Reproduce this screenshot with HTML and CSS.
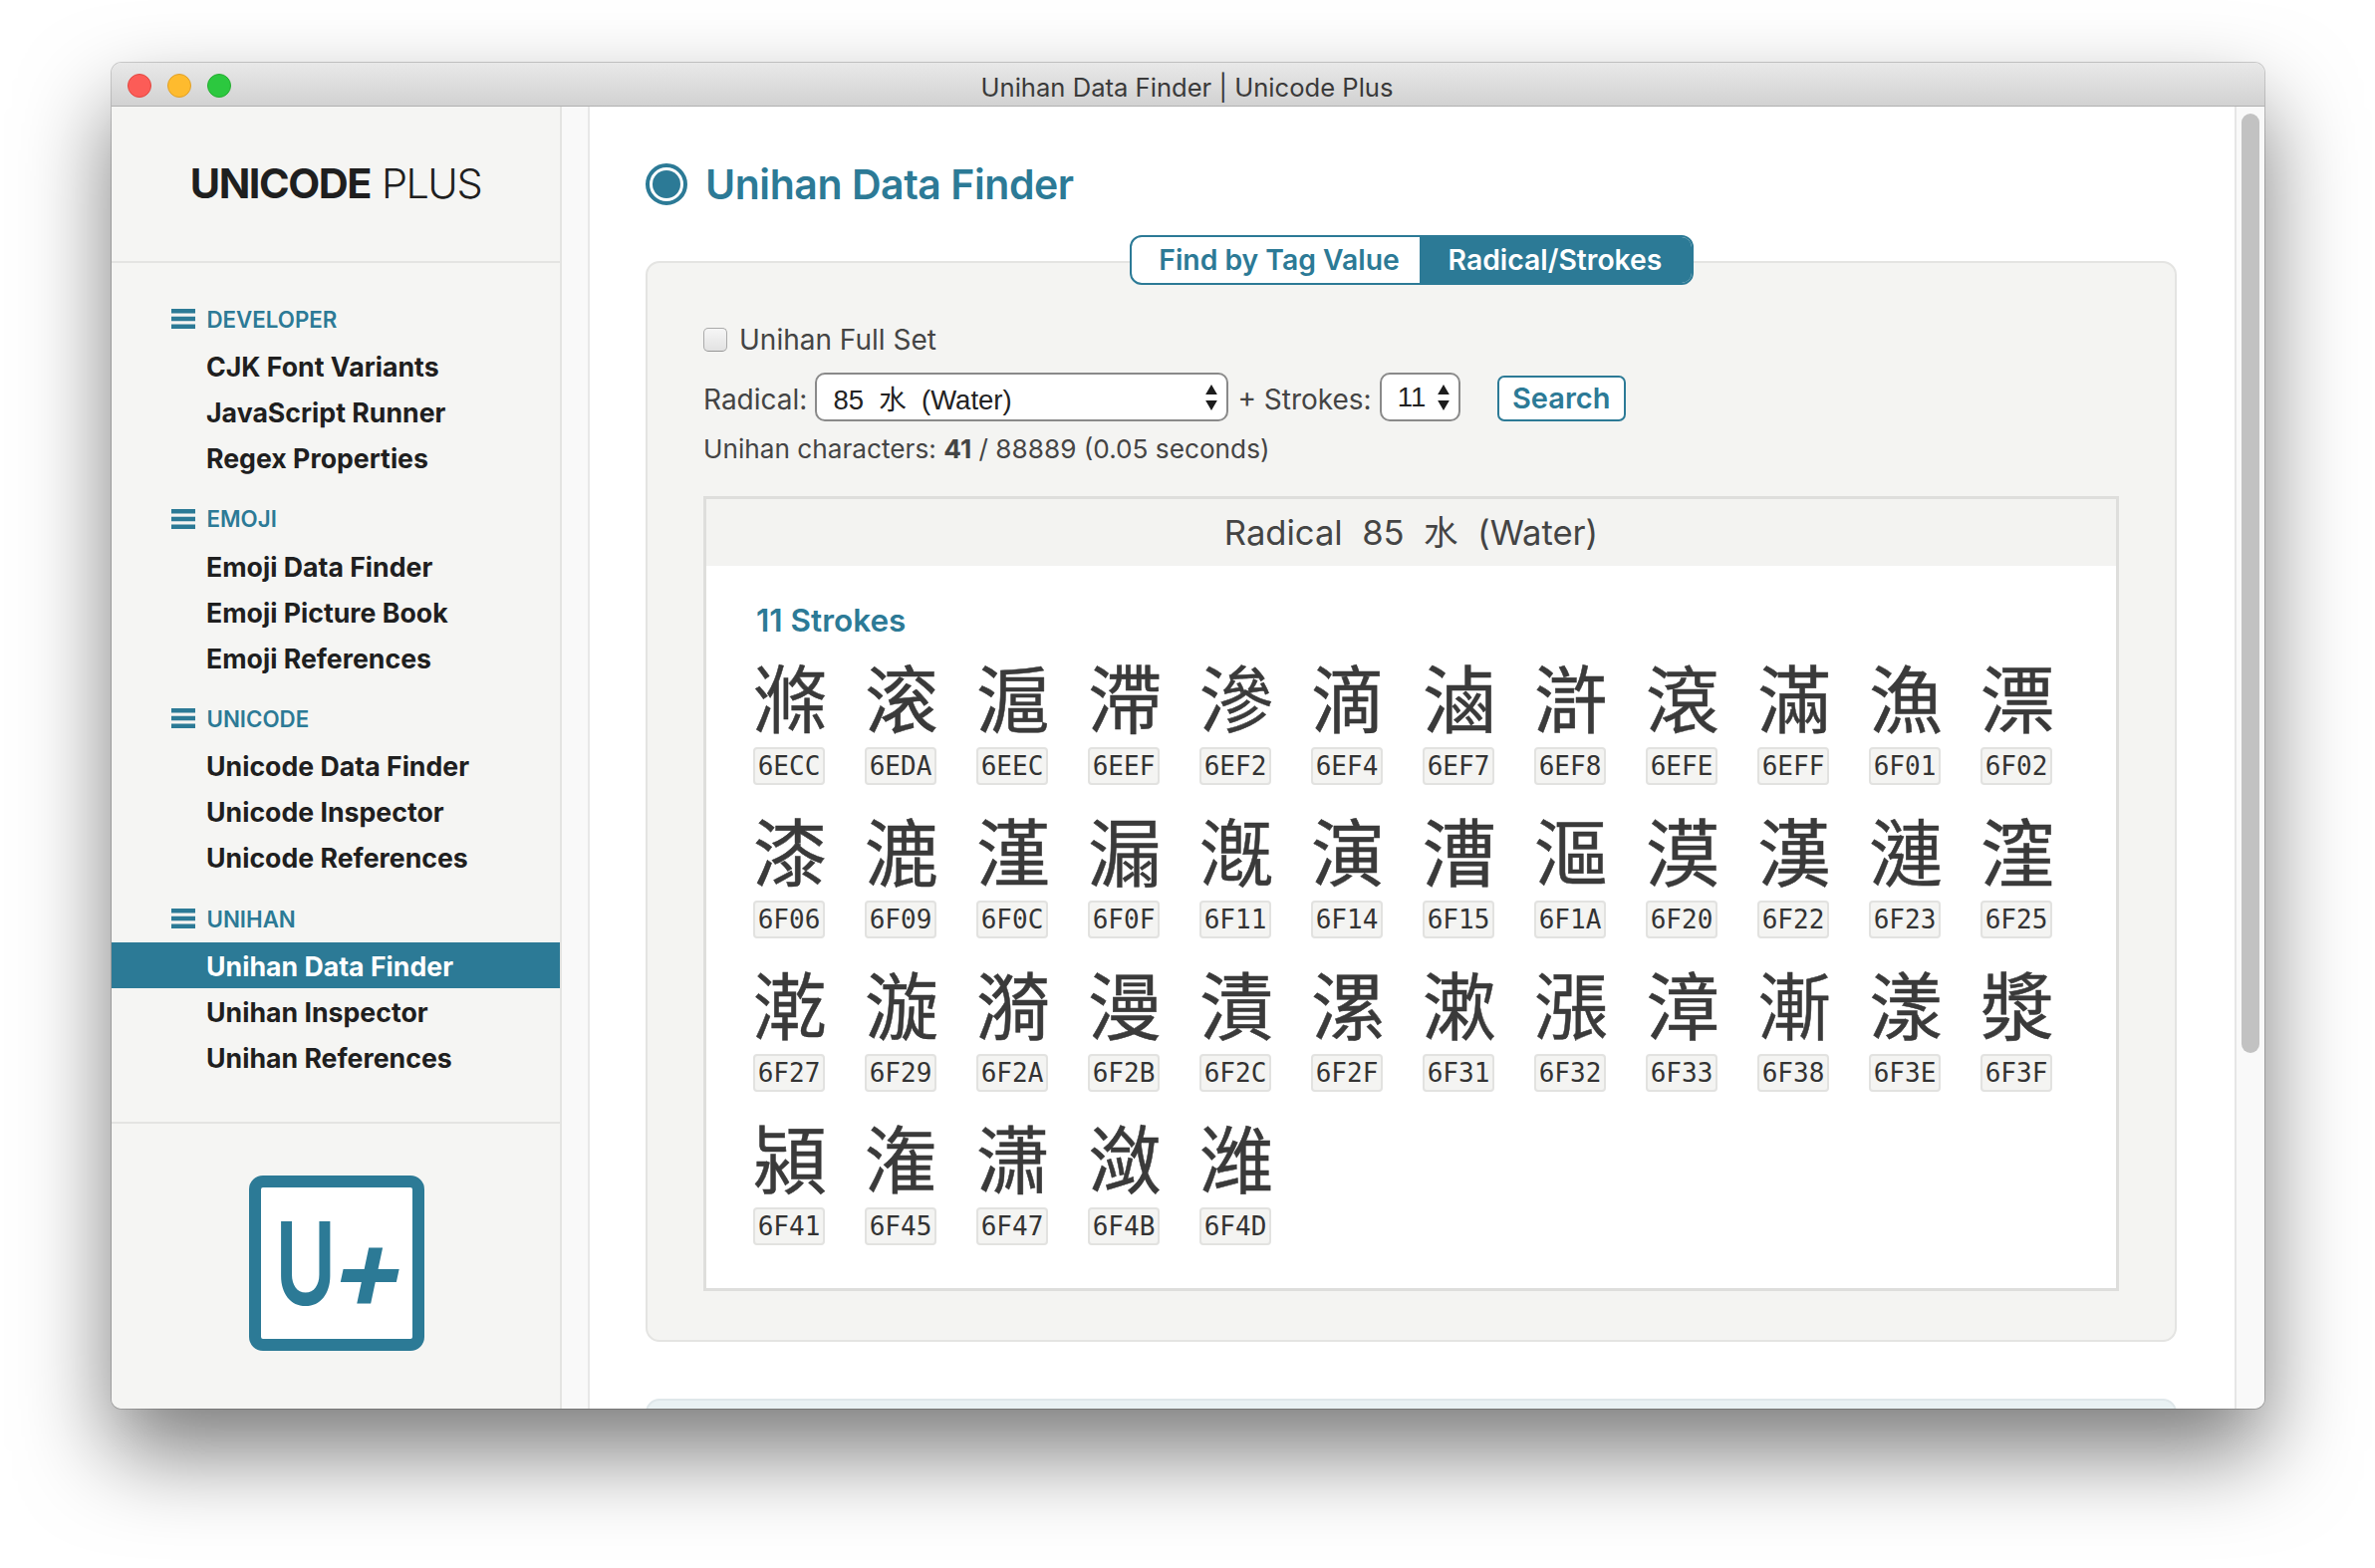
FILE: index.html
```html
<!DOCTYPE html>
<html lang="en">
<head>
    <meta charset="UTF-8">
    <title>Unihan Data Finder | Unicode Plus</title>
    <link rel="stylesheet" href="styles.css">
</head>
<body>
    <div class="window">
        <div class="titlebar">
            <div class="lights">
                <span class="light red"></span>
                <span class="light yellow"></span>
                <span class="light green"></span>
            </div>
            <span class="window-title">Unihan Data Finder | Unicode Plus</span>
        </div>

        <div class="app">
            <aside class="sidebar">
                <div class="brand"><b>UNICODE</b> PLUS</div>

                <nav class="nav">
                    <div class="group">
                        <div class="group-label">
                            <svg class="menu-icon" viewBox="0 0 24 20"><path d="M0 0h24v4.6H0zM0 7.7h24v4.6H0zM0 15.4h24V20H0z"/></svg>
                            DEVELOPER
                        </div>
                        <a class="item">CJK Font Variants</a>
                        <a class="item">JavaScript Runner</a>
                        <a class="item">Regex Properties</a>
                    </div>
                    <div class="group">
                        <div class="group-label">
                            <svg class="menu-icon" viewBox="0 0 24 20"><path d="M0 0h24v4.6H0zM0 7.7h24v4.6H0zM0 15.4h24V20H0z"/></svg>
                            EMOJI
                        </div>
                        <a class="item">Emoji Data Finder</a>
                        <a class="item">Emoji Picture Book</a>
                        <a class="item">Emoji References</a>
                    </div>
                    <div class="group">
                        <div class="group-label">
                            <svg class="menu-icon" viewBox="0 0 24 20"><path d="M0 0h24v4.6H0zM0 7.7h24v4.6H0zM0 15.4h24V20H0z"/></svg>
                            UNICODE
                        </div>
                        <a class="item">Unicode Data Finder</a>
                        <a class="item">Unicode Inspector</a>
                        <a class="item">Unicode References</a>
                    </div>
                    <div class="group">
                        <div class="group-label">
                            <svg class="menu-icon" viewBox="0 0 24 20"><path d="M0 0h24v4.6H0zM0 7.7h24v4.6H0zM0 15.4h24V20H0z"/></svg>
                            UNIHAN
                        </div>
                        <a class="item active">Unihan Data Finder</a>
                        <a class="item">Unihan Inspector</a>
                        <a class="item">Unihan References</a>
                    </div>
                </nav>

                <div class="sidebar-foot">
                    <div class="app-icon"><span class="app-u">U</span><span class="app-plus">+</span></div>
                </div>
            </aside>

            <div class="gutter"></div>

            <main class="main">
                <h1 class="page-title"><span class="radio-icon"></span>Unihan Data Finder</h1>

                <div class="tabs">
                    <span class="tab">Find by Tag Value</span>
                    <span class="tab selected">Radical/Strokes</span>
                </div>

                <section class="panel">
                    <label class="full-set"><input type="checkbox" class="check"> Unihan Full Set</label>

                    <div class="search-row">
                        <span>Radical:</span>
                        <div class="select radical"><span>85&nbsp; 水&nbsp; (Water)</span>
                            <svg class="updown" viewBox="0 0 12 26" preserveAspectRatio="none"><path d="M6 0l5 10H1zM6 26L1 16h10z"/></svg>
                        </div>
                        <span>+ Strokes:</span>
                        <div class="select strokes"><span>11</span>
                            <svg class="updown" viewBox="0 0 12 26" preserveAspectRatio="none"><path d="M6 0l5 10H1zM6 26L1 16h10z"/></svg>
                        </div>
                        <button type="button" class="search-btn">Search</button>
                    </div>

                    <p class="status">Unihan characters: <b>41</b> / 88889 (0.05 seconds)</p>

                    <div class="results">
                        <div class="results-head">Radical&nbsp; 85&nbsp; 水&nbsp; (Water)</div>
                        <div class="results-body">
                            <h2 class="strokes-title">11 Strokes</h2>
                            <div class="char-grid">
                                <div class="tile"><span class="glyph">&#x6ECC;</span><code class="code">6ECC</code></div>
                                <div class="tile"><span class="glyph">&#x6EDA;</span><code class="code">6EDA</code></div>
                                <div class="tile"><span class="glyph">&#x6EEC;</span><code class="code">6EEC</code></div>
                                <div class="tile"><span class="glyph">&#x6EEF;</span><code class="code">6EEF</code></div>
                                <div class="tile"><span class="glyph">&#x6EF2;</span><code class="code">6EF2</code></div>
                                <div class="tile"><span class="glyph">&#x6EF4;</span><code class="code">6EF4</code></div>
                                <div class="tile"><span class="glyph">&#x6EF7;</span><code class="code">6EF7</code></div>
                                <div class="tile"><span class="glyph">&#x6EF8;</span><code class="code">6EF8</code></div>
                                <div class="tile"><span class="glyph">&#x6EFE;</span><code class="code">6EFE</code></div>
                                <div class="tile"><span class="glyph">&#x6EFF;</span><code class="code">6EFF</code></div>
                                <div class="tile"><span class="glyph">&#x6F01;</span><code class="code">6F01</code></div>
                                <div class="tile"><span class="glyph">&#x6F02;</span><code class="code">6F02</code></div>
                                <div class="tile"><span class="glyph">&#x6F06;</span><code class="code">6F06</code></div>
                                <div class="tile"><span class="glyph">&#x6F09;</span><code class="code">6F09</code></div>
                                <div class="tile"><span class="glyph">&#x6F0C;</span><code class="code">6F0C</code></div>
                                <div class="tile"><span class="glyph">&#x6F0F;</span><code class="code">6F0F</code></div>
                                <div class="tile"><span class="glyph">&#x6F11;</span><code class="code">6F11</code></div>
                                <div class="tile"><span class="glyph">&#x6F14;</span><code class="code">6F14</code></div>
                                <div class="tile"><span class="glyph">&#x6F15;</span><code class="code">6F15</code></div>
                                <div class="tile"><span class="glyph">&#x6F1A;</span><code class="code">6F1A</code></div>
                                <div class="tile"><span class="glyph">&#x6F20;</span><code class="code">6F20</code></div>
                                <div class="tile"><span class="glyph">&#x6F22;</span><code class="code">6F22</code></div>
                                <div class="tile"><span class="glyph">&#x6F23;</span><code class="code">6F23</code></div>
                                <div class="tile"><span class="glyph">&#x6F25;</span><code class="code">6F25</code></div>
                                <div class="tile"><span class="glyph">&#x6F27;</span><code class="code">6F27</code></div>
                                <div class="tile"><span class="glyph">&#x6F29;</span><code class="code">6F29</code></div>
                                <div class="tile"><span class="glyph">&#x6F2A;</span><code class="code">6F2A</code></div>
                                <div class="tile"><span class="glyph">&#x6F2B;</span><code class="code">6F2B</code></div>
                                <div class="tile"><span class="glyph">&#x6F2C;</span><code class="code">6F2C</code></div>
                                <div class="tile"><span class="glyph">&#x6F2F;</span><code class="code">6F2F</code></div>
                                <div class="tile"><span class="glyph">&#x6F31;</span><code class="code">6F31</code></div>
                                <div class="tile"><span class="glyph">&#x6F32;</span><code class="code">6F32</code></div>
                                <div class="tile"><span class="glyph">&#x6F33;</span><code class="code">6F33</code></div>
                                <div class="tile"><span class="glyph">&#x6F38;</span><code class="code">6F38</code></div>
                                <div class="tile"><span class="glyph">&#x6F3E;</span><code class="code">6F3E</code></div>
                                <div class="tile"><span class="glyph">&#x6F3F;</span><code class="code">6F3F</code></div>
                                <div class="tile"><span class="glyph">&#x6F41;</span><code class="code">6F41</code></div>
                                <div class="tile"><span class="glyph">&#x6F45;</span><code class="code">6F45</code></div>
                                <div class="tile"><span class="glyph">&#x6F47;</span><code class="code">6F47</code></div>
                                <div class="tile"><span class="glyph">&#x6F4B;</span><code class="code">6F4B</code></div>
                                <div class="tile"><span class="glyph">&#x6F4D;</span><code class="code">6F4D</code></div>
                            </div>
                        </div>
                    </div>
                </section>

                <section class="panel next-panel"></section>
            </main>

            <div class="scrollbar"><div class="thumb"></div></div>
        </div>
    </div>
</body>
</html>
```

FILE: styles.css
```css
* {
    box-sizing: border-box;
}

body {
    margin: 0;
    background: #fff;
    font-family: Inter, "Noto Sans CJK TC", sans-serif;
    color: #444;
    height: 1574px;
    overflow: hidden;
}

.window {
    margin: 63px 0 0 112px;
    width: 2161px;
    height: 1351px;
    border-radius: 10px;
    overflow: hidden;
    display: flex;
    flex-direction: column;
    box-shadow: 0 0 0 1px rgba(0, 0, 0, 0.18), 0 44px 90px rgba(0, 0, 0, 0.52);
}

/* title bar */
.titlebar {
    height: 44px;
    flex: none;
    display: flex;
    align-items: center;
    justify-content: center;
    position: relative;
    background: linear-gradient(#e8e8e8, #d2d2d2);
    border-bottom: 1px solid #b1b1b1;
}

.lights {
    position: absolute;
    left: 16px;
    top: 11px;
    display: flex;
    gap: 16px;
}

.light {
    width: 24px;
    height: 24px;
    border-radius: 50%;
    border: 1px solid;
}

.red { background: #fc5c57; border-color: #e2463f; }
.yellow { background: #febb2e; border-color: #e0a028; }
.green { background: #2cc83f; border-color: #25ad30; }

.window-title {
    font-size: 25.6px;
    color: #3a3a3a;
    padding: 5px 2px 0 0;
}

.app {
    flex: 1;
    min-height: 0;
    display: flex;
}

/* sidebar */
.sidebar {
    width: 452px;
    flex: none;
    display: flex;
    flex-direction: column;
    background: #f5f5f3;
    border-right: 2px solid #e4e4e2;
}

.brand {
    height: 157px;
    flex: none;
    display: flex;
    gap: 11px;
    align-items: center;
    justify-content: center;
    border-bottom: 2px solid #e4e4e2;
    font-size: 41.5px;
    font-weight: 300;
    letter-spacing: -1.5px;
    color: #1f1f1f;
    padding-bottom: 1px;
}

.brand b {
    font-weight: 700;
}

.nav {
    flex: 1;
    padding-top: 32px;
}

.group {
    margin-bottom: 14.7px;
}

.group-label {
    height: 48px;
    padding-left: 60px;
    display: flex;
    align-items: center;
    gap: 11.5px;
    font-size: 22.3px;
    font-weight: 600;
    color: #2c7a96;
}

.menu-icon {
    width: 24px;
    height: 20px;
    fill: #2c7a96;
}

.item {
    display: block;
    height: 46px;
    line-height: 48px;
    padding-left: 95px;
    font-size: 26.7px;
    font-weight: 700;
    color: #1f1f1f;
}

.item.active {
    background: #2c7a96;
    color: #fff;
}

.sidebar-foot {
    height: 288px;
    flex: none;
    border-top: 2px solid #e4e4e2;
    padding: 52px 0 0 2px;
    display: flex;
    justify-content: center;
    align-items: flex-start;
}

.app-icon {
    width: 176px;
    height: 176px;
    border: 12.5px solid #2c7a96;
    border-radius: 14px;
    background: #fff;
    color: #2c7a96;
    display: flex;
    align-items: center;
    justify-content: center;
    line-height: 1;
    font-weight: 600;
    padding-left: 7px;
}

.app-u {
    font-size: 116px;
    display: inline-block;
    transform: scaleX(0.72);
    margin: 0 -14px 0 -8px;
}

.app-plus {
    font-size: 112px;
    font-weight: 700;
    display: inline-block;
    transform: skewX(-12deg);
    margin-top: 8px;
}

.gutter {
    width: 28px;
    flex: none;
    background: #f9f9f9;
    border-right: 2px solid #e8e8e8;
}

/* main column */
.main {
    flex: 1;
    min-width: 0;
    overflow: hidden;
    background: #fff;
    padding: 56px 58px 0 56px;
}

.page-title {
    margin: 0;
    height: 44px;
    display: flex;
    align-items: center;
    gap: 18px;
    font-size: 41px;
    font-weight: 600;
    letter-spacing: -0.45px;
    color: #2c7a96;
}

.radio-icon {
    width: 42px;
    height: 42px;
    border: 4px solid #2c7a96;
    border-radius: 50%;
    padding: 3px;
    background: #2c7a96;
    background-clip: content-box;
}

.tabs {
    width: 566px;
    height: 50px;
    margin: 29px auto -24px;
    position: relative;
    z-index: 1;
    display: flex;
    border: 2px solid #2c7a96;
    border-radius: 12px;
    overflow: hidden;
    background: #fff;
    font-size: 28.3px;
    font-weight: 600;
    color: #2c7a96;
}

.tab {
    display: flex;
    align-items: center;
    justify-content: center;
    width: 289px;
    padding-left: 8px;
}

.tab.selected {
    flex: 1;
    padding-left: 0;
    background: #2c7a96;
    color: #fff;
}

.panel {
    border: 2px solid #e4e4e2;
    border-radius: 14px;
    background: #f4f4f2;
    padding: 0 56px 50px;
    height: 1085px;
    font-size: 28px;
}

.full-set {
    display: flex;
    align-items: center;
    gap: 12px;
    height: 36px;
    padding-top: 58.5px;
    box-sizing: content-box;
}

.check {
    appearance: none;
    margin: 0;
    width: 24px;
    height: 24px;
    border: 1px solid #aaa;
    border-bottom-color: #969696;
    border-radius: 5px;
    background: linear-gradient(#f6f6f6, #e2e2e2);
}

.search-row {
    display: flex;
    align-items: center;
    height: 50px;
    margin-top: 17px;
}

.select {
    height: 49px;
    display: flex;
    align-items: center;
    justify-content: space-between;
    background: #fff;
    border: 2px solid #8a8a8a;
    border-radius: 10px;
    margin-bottom: 4px;
    color: #222;
    font-family: "Liberation Sans", "Noto Sans CJK TC", sans-serif;
    font-size: 27.5px;
    padding: 0 8px 0 16px;
}

.radical {
    width: 415px;
    margin-left: 8px;
    margin-right: 9px;
}

.strokes {
    width: 81px;
    margin-left: 8px;
}

.updown {
    width: 14px;
    height: 26px;
    fill: #1c1c1c;
}

.search-btn {
    margin: 0 0 2px 37px;
    width: 129px;
    height: 46px;
    background: #fff;
    border: 2.5px solid #2c7a96;
    border-radius: 7px;
    color: #2c7a96;
    font: 600 29px Inter, sans-serif;
    padding: 0;
}

.status {
    margin: 3.5px 0 0;
    height: 44px;
    line-height: 44px;
    font-size: 26.2px;
}

.status b {
    font-weight: 700;
}

.results {
    margin-top: 25px;
    height: 798px;
    border: 3px solid #dededc;
    background: #fff;
}

.results-head {
    height: 67px;
    line-height: 67px;
    text-align: center;
    background: #f3f3f1;
    font-size: 34.6px;
}

.results-body {
    padding: 0 47px;
}

.strokes-title {
    margin: 0;
    padding: 37px 0 0 3px;
    height: 73px;
    line-height: 36px;
    font-size: 31.5px;
    font-weight: 600;
    color: #2c7a96;
}

.char-grid {
    display: grid;
    grid-template-columns: repeat(12, 72px);
    column-gap: 40px;
    row-gap: 20px;
    margin-top: 13px;
}

.tile {
    display: flex;
    flex-direction: column;
    align-items: center;
}

.glyph {
    height: 88px;
    line-height: 88px;
    margin-bottom: 8px;
    padding-left: 2px;
    font-size: 74px;
    font-weight: 400;
    -webkit-text-stroke: 0.5px #3a3a3a;
    color: #3a3a3a;
    font-family: "Noto Sans CJK TC", sans-serif;
}

.code {
    width: 72px;
    height: 38px;
    line-height: 34px;
    text-align: center;
    background: #f4f4f2;
    border: 2px solid #e2e2e0;
    border-radius: 4px;
    font-family: "DejaVu Sans Mono", monospace;
    font-size: 26px;
    color: #333;
}

.next-panel {
    margin-top: 57px;
    background: #e9f1f3;
    border-color: #dfe7ea;
}

/* scrollbar */
.scrollbar {
    width: 30px;
    flex: none;
    background: #f9f9f9;
    border-left: 2px solid #e6e6e6;
    padding: 7px 5px 0;
}

.thumb {
    height: 943px;
    background: #c2c2c2;
    border-radius: 9px;
}
```
